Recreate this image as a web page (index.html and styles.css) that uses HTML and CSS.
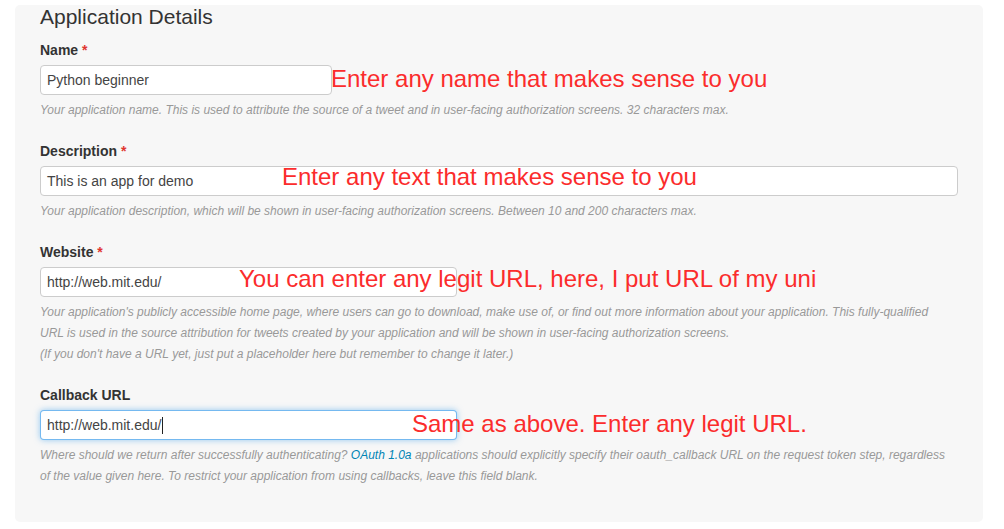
FILE: index.html
```html
<!DOCTYPE html>
<html lang="en">
<head>
<meta charset="utf-8">
<title>Application Details</title>
<link rel="stylesheet" href="styles.css">
</head>
<body>
<section class="panel">
  <h2 class="title">Application Details</h2>

  <div class="group">
    <label class="label">Name <span class="req">*</span></label>
    <div class="row">
      <div class="field w-name">Python beginner</div>
      <span class="note note-name">Enter any name that makes sense to you</span>
    </div>
    <p class="help">Your application name. This is used to attribute the source of a tweet and in user-facing authorization screens. 32 characters max.</p>
  </div>

  <div class="group">
    <label class="label">Description <span class="req">*</span></label>
    <div class="row">
      <div class="field w-full">This is an app for demo</div>
      <span class="note note-desc">Enter any text that makes sense to you</span>
    </div>
    <p class="help">Your application description, which will be shown in user-facing authorization screens. Between 10 and 200 characters max.</p>
  </div>

  <div class="group">
    <label class="label">Website <span class="req">*</span></label>
    <div class="row">
      <div class="field w-url">http://web.mit.edu/</div>
      <span class="note note-web">You can enter any legit URL, here, I put URL of my uni</span>
    </div>
    <p class="help">Your application's publicly accessible home page, where users can go to download, make use of, or find out more information about your application. This fully-qualified<br>URL is used in the source attribution for tweets created by your application and will be shown in user-facing authorization screens.<br>(If you don't have a URL yet, just put a placeholder here but remember to change it later.)</p>
  </div>

  <div class="group">
    <label class="label">Callback URL</label>
    <div class="row">
      <div class="field w-url focused">http://web.mit.edu/<span class="caret"></span></div>
      <span class="note note-cb">Same as above. Enter any legit URL.</span>
    </div>
    <p class="help">Where should we return after successfully authenticating? <a class="link" href="#">OAuth 1.0a</a> applications should explicitly specify their oauth_callback URL on the request token step, regardless<br>of the value given here. To restrict your application from using callbacks, leave this field blank.</p>
  </div>
</section>
</body>
</html>
```

FILE: styles.css
```css
* { box-sizing: border-box; }

html, body {
  margin: 0;
  padding: 0;
  background: #ffffff;
}

body {
  font-family: "Liberation Sans", Arial, sans-serif;
  color: #333333;
}

.panel {
  width: 968px;
  margin: 5px 0 0 15px;
  padding: 0 25px 35px 25px;
  background: #f7f7f7;
  border-radius: 5px;
}

.title {
  margin: 0 0 11px 0;
  font-size: 21px;
  line-height: 24px;
  font-weight: normal;
  color: #333333;
}

.group {
  margin-bottom: 20px;
}

.group:last-child {
  margin-bottom: 0;
}

.label {
  display: block;
  font-size: 14px;
  line-height: 20px;
  font-weight: bold;
  color: #333333;
  margin-bottom: 5px;
}

.req {
  color: #e0352f;
  font-weight: bold;
}

.row {
  position: relative;
  height: 30px;
}

.field {
  height: 30px;
  padding: 0 6px;
  border: 1px solid #cccccc;
  border-radius: 4px;
  background: #ffffff;
  font-size: 14px;
  line-height: 28px;
  color: #444444;
  white-space: nowrap;
}

.w-name { width: 292px; }
.w-full { width: 918px; }
.w-url { width: 417px; }

.field.focused {
  border-color: rgba(82, 168, 236, 0.8);
  box-shadow: 0 0 6px rgba(82, 168, 236, 0.6);
}

.caret {
  display: inline-block;
  width: 1px;
  height: 17px;
  background: #222222;
  vertical-align: -4px;
  margin-left: 1px;
}

.note {
  position: absolute;
  font-size: 24px;
  line-height: 24px;
  color: #fb2c2c;
  white-space: nowrap;
}

.note-name { left: 291px; top: 2px; }
.note-desc { left: 242px; top: -1px; }
.note-web  { left: 199px; top: 0; }
.note-cb   { left: 372px; top: 2px; }

.help {
  margin: 5px 0 0 0;
  font-size: 12px;
  line-height: 21px;
  font-style: italic;
  color: #999999;
}

.link {
  color: #0084b4;
  text-decoration: none;
}
```
